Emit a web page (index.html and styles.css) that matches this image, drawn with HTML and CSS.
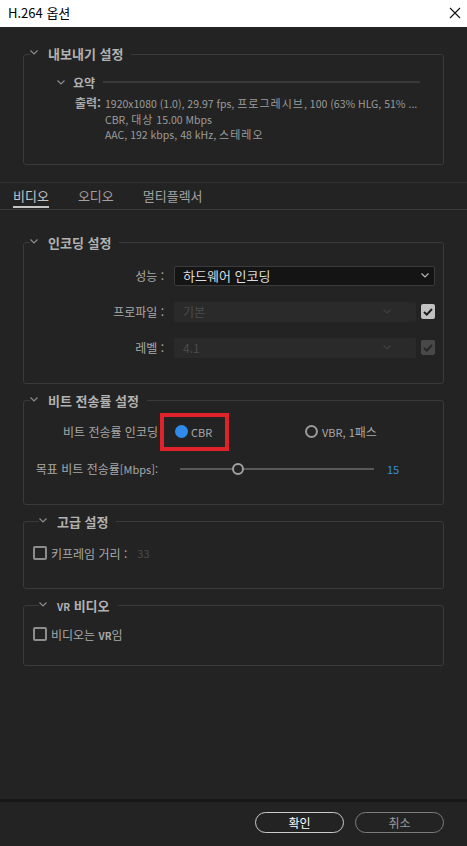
FILE: index.html
```html
<!DOCTYPE html>
<html lang="ko">
<head>
    <meta charset="UTF-8">
    <meta name="viewport" content="width=device-width, initial-scale=1.0">
    <title>H.264 옵션</title>
    <link rel="stylesheet" href="styles.css">
</head>
<body>

<div class="window">
    <!-- Title bar -->
    <div class="titlebar">
        <span class="title">H.264 옵션</span>
        <svg class="close" width="12" height="12" viewBox="0 0 12 12">
            <path d="M1 1L11 11M11 1L1 11" stroke="#111" stroke-width="1.1" fill="none"/>
        </svg>
    </div>

    <!-- Export settings -->
    <div class="top-area">
        <fieldset class="group export-group">
            <legend><svg class="chev" width="8" height="5" viewBox="0 0 8 5"><polyline points="0.5,0.5 4,4 7.5,0.5"/></svg>내보내기 설정</legend>
            <div class="subhead">
                <svg class="chev" width="8" height="5" viewBox="0 0 8 5"><polyline points="0.5,0.5 4,4 7.5,0.5"/></svg>
                <span>요약</span>
                <div class="subline"></div>
            </div>
            <div class="summary">
                <span class="sum-label">출력:</span>
                <div class="sum-lines">
                    <div>1920x1080 (1.0), 29.97 fps, <span class="ko">프로그레시브</span>, 100 (63% HLG, 51% ...</div>
                    <div>CBR, <span class="ko">대상</span> 15.00 Mbps</div>
                    <div>AAC, 192 kbps, 48 kHz, <span class="ko">스테레오</span></div>
                </div>
            </div>
        </fieldset>
    </div>

    <!-- Tabs -->
    <div class="tabs">
        <div class="tab active">비디오</div>
        <div class="tab">오디오</div>
        <div class="tab">멀티플렉서</div>
    </div>

    <div class="panel">
        <!-- Encoding -->
        <fieldset class="group enc-group">
            <legend><svg class="chev" width="8" height="5" viewBox="0 0 8 5"><polyline points="0.5,0.5 4,4 7.5,0.5"/></svg>인코딩 설정</legend>
            <div class="form-grid">
                <span class="label">성능 :</span>
                <div class="select">
                    <span>하드웨어 인코딩</span>
                    <svg class="sel-chev" width="8" height="5" viewBox="0 0 8 5"><polyline points="0.5,0.5 4,4 7.5,0.5"/></svg>
                </div>

                <span class="label">프로파일 :</span>
                <div class="sel-wrap">
                    <div class="select disabled">
                        <span>기본</span>
                        <svg class="sel-chev" width="8" height="5" viewBox="0 0 8 5"><polyline points="0.5,0.5 4,4 7.5,0.5"/></svg>
                    </div>
                    <span class="check on">
                        <svg width="10" height="8" viewBox="0 0 10 8"><polyline points="1,4 3.8,6.6 9,1"/></svg>
                    </span>
                </div>

                <span class="label">레벨 :</span>
                <div class="sel-wrap">
                    <div class="select disabled">
                        <span>4.1</span>
                        <svg class="sel-chev" width="8" height="5" viewBox="0 0 8 5"><polyline points="0.5,0.5 4,4 7.5,0.5"/></svg>
                    </div>
                    <span class="check dim">
                        <svg width="10" height="8" viewBox="0 0 10 8"><polyline points="1,4 3.8,6.6 9,1"/></svg>
                    </span>
                </div>
            </div>
        </fieldset>

        <!-- Bitrate -->
        <fieldset class="group bitrate-group">
            <legend><svg class="chev" width="8" height="5" viewBox="0 0 8 5"><polyline points="0.5,0.5 4,4 7.5,0.5"/></svg>비트 전송률 설정</legend>
            <div class="bit-grid">
                <span class="label">비트 전송률 인코딩</span>
                <div class="choices">
                    <span class="highlight">
                        <span class="radio on"></span>
                        <span class="opt">CBR</span>
                    </span>
                    <span class="vbr">
                        <span class="radio"></span>
                        <span class="opt">VBR, 1<span class="ko-tight">패스</span></span>
                    </span>
                </div>

                <span class="label">목표 비트 전송률<span class="unit">[Mbps]:</span></span>
                <div class="slider">
                    <div class="track left"></div>
                    <div class="thumb"></div>
                    <div class="track right"></div>
                    <span class="value">15</span>
                </div>
            </div>
        </fieldset>

        <!-- Advanced -->
        <fieldset class="group adv-group">
            <legend><svg class="chev" width="8" height="5" viewBox="0 0 8 5"><polyline points="0.5,0.5 4,4 7.5,0.5"/></svg>고급 설정</legend>
            <div class="check-row">
                <span class="box"></span>
                <span>키프레임 거리 :</span>
                <span class="dim-val">33</span>
            </div>
        </fieldset>

        <!-- VR -->
        <fieldset class="group vr-group">
            <legend><svg class="chev" width="8" height="5" viewBox="0 0 8 5"><polyline points="0.5,0.5 4,4 7.5,0.5"/></svg><span class="small-vr">VR</span> 비디오</legend>
            <div class="check-row">
                <span class="box"></span>
                <span>비디오는 <span class="small-vr">VR</span>임</span>
            </div>
        </fieldset>
    </div>

    <!-- Footer -->
    <div class="footer">
        <button class="btn primary">확인</button>
        <button class="btn">취소</button>
    </div>
</div>

</body>
</html>
```

FILE: styles.css
```css
/* Reset */
* {
    box-sizing: border-box;
}

html, body {
    margin: 0;
    padding: 0;
}

body {
    width: 467px;
    height: 846px;
    background-color: #232323;
    font-family: "Noto Sans CJK KR", "Noto Sans", sans-serif;
    color: #a8a8a8;
    overflow: hidden;
}

.window {
    display: flex;
    flex-direction: column;
    height: 100%;
}

/* Title bar */
.titlebar {
    height: 27px;
    flex-shrink: 0;
    background-color: #fff;
    display: flex;
    align-items: center;
    justify-content: space-between;
    padding: 0 6px 2px 8px;
}

.title {
    font-size: 13px;
    color: #000;
}

/* Group boxes */
.group {
    margin: 0;
    padding: 0;
    min-width: 0;
    border: 1px solid #3a3a3a;
    border-radius: 3px;
}

.group legend {
    margin-left: 6px;
    padding: 0 8px 0 0;
    height: 20px;
    line-height: 20px;
    font-size: 13px;
    font-weight: bold;
    color: #b2b2b2;
}

.chev {
    fill: none;
    stroke: #8c8c8c;
    stroke-width: 1.2;
}

.group legend .chev {
    margin-right: 10px;
    vertical-align: 4px;
}

.small-vr {
    font-size: 10px;
    font-weight: bold;
}

/* Export settings */
.top-area {
    padding: 0 23px;
}

.export-group {
    margin-top: 17px;
    padding-bottom: 21px;
}

.subhead {
    display: flex;
    align-items: center;
    height: 16px;
    margin-top: 10px;
    padding-left: 33px;
    font-size: 12px;
    font-weight: bold;
    color: #b2b2b2;
}

.subhead .chev {
    margin-right: 8px;
}

.subline {
    flex: 1;
    height: 2px;
    margin: 0 23px 0 8px;
    background-color: #393939;
}

.summary {
    display: flex;
    gap: 4px;
    margin-top: 6px;
    padding-left: 51px;
    font-size: 10.5px;
    line-height: 14.5px;
    color: #9c9c9c;
}

.sum-label {
    font-size: 12px;
    font-weight: bold;
    color: #a8a8a8;
}

.ko {
    font-size: 11px;
    letter-spacing: 1px;
}

/* Tabs */
.tabs {
    margin-top: 17px;
    height: 28px;
    display: flex;
    gap: 29px;
    padding-left: 13px;
    border-top: 1px solid #323232;
    border-bottom: 1px solid #3a3a3a;
}

.tab {
    height: 25px;
    padding-top: 2px;
    display: flex;
    align-items: center;
    font-size: 13px;
    color: #a2a2a2;
    border-bottom: 2px solid transparent;
}

.tab.active {
    color: #c6c6c6;
    border-bottom-color: #c4c4c4;
}

/* Panel */
.panel {
    padding: 0 23px;
}

.panel .group + .group {
    margin-top: 7px;
}

.enc-group {
    margin-top: 23px;
    padding: 13px 8px 25px 0;
}

.form-grid {
    display: grid;
    grid-template-columns: 140px 1fr;
    column-gap: 10px;
    row-gap: 16px;
    align-items: center;
}

.label {
    text-align: right;
    font-size: 12px;
    color: #a8a8a8;
    white-space: nowrap;
}

.select {
    height: 20px;
    display: flex;
    align-items: center;
    justify-content: space-between;
    padding: 0 5px 0 8px;
    background-color: #141414;
    border: 1px solid #3c3c3c;
    border-radius: 2px;
    font-size: 13px;
    color: #dcdcdc;
}

.sel-chev {
    fill: none;
    stroke: #b8b8b8;
    stroke-width: 1.2;
}

.select.disabled {
    flex: 1;
    background-color: #2a2a2a;
    border-color: #2a2a2a;
    font-size: 12px;
    color: #4a4a4a;
    padding-right: 24px;
}

.select.disabled .sel-chev {
    stroke: #404040;
}

.sel-wrap {
    display: flex;
    align-items: center;
    gap: 5px;
}

.check {
    width: 14px;
    height: 15px;
    border-radius: 2px;
    display: flex;
    align-items: center;
    justify-content: center;
}

.check svg {
    fill: none;
    stroke-width: 2;
}

.check.on {
    background-color: #c2c2c2;
}

.check.on svg {
    stroke: #1e1e1e;
}

.check.dim {
    background-color: #484848;
}

.check.dim svg {
    stroke: #262626;
}

/* Bitrate */
.bitrate-group {
    padding: 2px 8px 25px 0;
}

.bit-grid {
    display: grid;
    grid-template-columns: 134px 1fr;
    column-gap: 2px;
    row-gap: 8px;
    align-items: center;
}

.unit {
    font-size: 11px;
}

.choices {
    display: flex;
    align-items: center;
}

.highlight {
    width: 69px;
    height: 38px;
    display: flex;
    align-items: center;
    gap: 3px;
    padding-left: 11px;
    border: 4px solid #e0222b;
}

.radio {
    width: 13px;
    height: 13px;
    border-radius: 50%;
    border: 2px solid #9a9a9a;
}

.radio.on {
    border: none;
    background-color: #2f8ceb;
}

.opt {
    font-size: 11px;
    color: #a8a8a8;
}

.ko-tight {
    font-size: 12px;
}

.vbr {
    display: flex;
    align-items: center;
    gap: 4px;
    margin-left: 76px;
}

.slider {
    height: 20px;
    display: flex;
    align-items: center;
    margin-left: 20px;
}

.track {
    height: 2px;
    background-color: #585858;
}

.track.left {
    width: 52px;
}

.track.right {
    width: 130px;
}

.thumb {
    width: 12px;
    height: 12px;
    border-radius: 50%;
    border: 2px solid #a2a2a2;
}

.value {
    margin-left: 13px;
    font-size: 11px;
    color: #3a8ddd;
}

/* Checkbox rows */
.adv-group {
    padding: 14px 8px 27px 9px;
}

.vr-group {
    padding: 11px 8px 23px 9px;
}

.check-row {
    height: 15px;
    display: flex;
    align-items: center;
    gap: 4px;
    font-size: 12px;
    color: #a8a8a8;
}

.box {
    width: 14px;
    height: 14px;
    border: 2px solid #8c8c8c;
    border-radius: 2px;
}

.dim-val {
    margin-left: 6px;
    font-size: 11px;
    color: #4a4a4a;
}

/* Footer */
.footer {
    margin-top: auto;
    height: 47px;
    display: flex;
    justify-content: flex-end;
    gap: 11px;
    padding: 10px 23px 0;
    border-top: 3px solid #171717;
}

.btn {
    width: 89px;
    height: 21px;
    padding: 0;
    border-radius: 11px;
    border: 1.5px solid #7c7c7c;
    background-color: transparent;
    font-family: "Noto Sans CJK KR", sans-serif;
    font-size: 12px;
    color: #9a9a9a;
}

.btn.primary {
    border-color: #cbcbcb;
    color: #fff;
}
```
